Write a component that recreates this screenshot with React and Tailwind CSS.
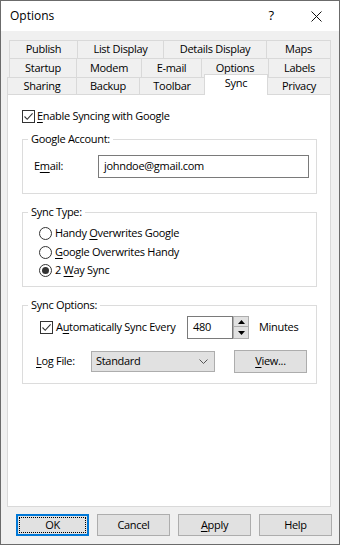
const font = { fontFamily: "'Open Sans', 'Liberation Sans', sans-serif" };

function U({ children }) {
  return <span className="underline underline-offset-[2px]">{children}</span>;
}

function Tab({ label, w, first, active }) {
  return (
    <div
      className={`${w} ${first ? "" : "-ml-px"} ${
        active
          ? "relative z-10 -mt-[3px] h-[21px] bg-white pb-[4px]"
          : "h-full bg-[#f0f0f0]"
      } flex items-center justify-center border border-b-0 border-[#d9d9d9] text-black`}
    >
      {label}
    </div>
  );
}

function Check() {
  return (
    <div className="flex h-[13px] w-[13px] shrink-0 items-center justify-center border border-[#333] bg-white">
      <svg width="11" height="11" viewBox="0 0 11 11" fill="none">
        <path d="M1.5 5.5 L4.2 8.3 L9.6 2.3" stroke="#333" strokeWidth="1.1" />
      </svg>
    </div>
  );
}

function Radio({ on }) {
  return (
    <div className="flex h-[13px] w-[13px] shrink-0 items-center justify-center rounded-full border border-[#333] bg-white">
      {on && <div className="h-[7px] w-[7px] rounded-full bg-[#333]" />}
    </div>
  );
}

function Group({ title, className, children }) {
  return (
    <fieldset className={`w-[295px] border border-[#dcdcdc] ${className}`}>
      <legend className="ml-[5px] px-[3px] leading-[16px] text-black">{title}</legend>
      {children}
    </fieldset>
  );
}

function Button({ children, def }) {
  return (
    <button
      className={`flex h-[22px] w-[73px] items-center justify-center bg-[#e1e1e1] text-black ${
        def
          ? "border-2 border-[#0078d7] outline-1 outline-dotted outline-black outline-offset-[-4px]"
          : "border border-[#adadad]"
      }`}
    >
      {children}
    </button>
  );
}

export default function App() {
  return (
    <div
      style={font}
      className="flex h-[545px] w-[340px] flex-col border border-[#6b6b6b] bg-[#f0f0f0] text-[11px] tracking-[-0.3px] text-black"
    >
      {/* title bar */}
      <div className="flex h-[30px] items-center bg-white pl-[9px] text-[12px] tracking-normal">
        <span>Options</span>
        <span className="ml-auto mr-[37px] text-[13px]">?</span>
        <svg className="mr-[17px]" width="11" height="11" viewBox="0 0 11 11">
          <path d="M0.5 0.5 L10.5 10.5 M10.5 0.5 L0.5 10.5" stroke="#111" strokeWidth="1" />
        </svg>
      </div>

      <div className="flex flex-col pl-[6px] pt-[9px]">
        {/* tab rows */}
        <div className="flex h-[18px] pl-[2px]">
          <Tab first label="Publish" w="w-[69px]" />
          <Tab label="List Display" w="w-[87px]" />
          <Tab label="Details Display" w="w-[104px]" />
          <Tab label="Maps" w="w-[65px]" />
        </div>
        <div className="flex h-[19px] pl-[2px]">
          <Tab first label="Startup" w="w-[68px]" />
          <Tab label="Modem" w="w-[66px]" />
          <Tab label="E-mail" w="w-[61px]" />
          <Tab label="Options" w="w-[68px]" />
          <Tab label="Labels" w="w-[63px]" />
        </div>
        <div className="flex h-[17px]">
          <Tab first label="Sharing" w="w-[70px]" />
          <Tab label="Backup" w="w-[64px]" />
          <Tab label="Toolbar" w="w-[66px]" />
          <Tab active label="Sync" w="w-[64px]" />
          <Tab label="Privacy" w="w-[64px]" />
        </div>

        {/* panel */}
        <div className="h-[413px] w-[324px] border border-[#d9d9d9] bg-white px-[14px] pt-[13px]">
          <div className="flex h-[16px] items-center gap-[2px]">
            <Check />
            <span>
              <U>E</U>nable Syncing with Google
            </span>
          </div>

          <Group title="Google Account:" className="mt-[7px] pb-[15px]">
            <div className="mt-[8px] flex items-center pl-[11px]">
              <span className="w-[64px]">
                E<U>m</U>ail:
              </span>
              <div className="flex h-[23px] w-[211px] items-center border border-[#7a7a7a] px-[5px]">
                johndoe@gmail.com
              </div>
            </div>
          </Group>

          <Group title="Sync Type:" className="mt-[10px] pb-[7px] pt-[4px]">
            <div className="flex flex-col pl-[16px]">
              <div className="flex h-[19px] items-center gap-[3px]">
                <Radio />
                <span>
                  Handy <U>O</U>verwrites Google
                </span>
              </div>
              <div className="flex h-[18px] items-center gap-[3px]">
                <Radio />
                <span>
                  <U>G</U>oogle Overwrites Handy
                </span>
              </div>
              <div className="flex h-[18px] items-center gap-[3px]">
                <Radio on />
                <span>
                  2 <U>W</U>ay Sync
                </span>
              </div>
            </div>
          </Group>

          <Group title="Sync Options:" className="mt-[10px] pb-[10px]">
            <div className="mt-[3px] flex h-[23px] items-center pl-[17px]">
              <div className="flex w-[147px] items-center gap-[3px] whitespace-nowrap">
                <Check />
                <span>
                  A<U>u</U>tomatically Sync Every
                </span>
              </div>
              <div className="flex h-[23px] w-[46px] items-center border border-[#7a7a7a] px-[5px]">480</div>
              <div className="flex h-[23px] w-[16px] flex-col">
                <div className="flex h-[11px] items-center justify-center border border-[#adadad] bg-[#e1e1e1]">
                  <svg width="7" height="4" viewBox="0 0 7 4">
                    <path d="M0 4 L3.5 0 L7 4 Z" fill="#000" />
                  </svg>
                </div>
                <div className="-mt-px flex h-[13px] items-center justify-center border border-[#adadad] bg-[#e1e1e1]">
                  <svg width="7" height="4" viewBox="0 0 7 4">
                    <path d="M0 0 L7 0 L3.5 4 Z" fill="#000" />
                  </svg>
                </div>
              </div>
              <span className="ml-[10px]">Minutes</span>
            </div>
            <div className="mt-[11px] flex h-[23px] items-center pl-[13px]">
              <span className="w-[55px]">
                <U>L</U>og File:
              </span>
              <div className="flex h-[21px] w-[124px] items-center border border-[#adadad] bg-[#e1e1e1] pl-[4px] pr-[6px]">
                <span>Standard</span>
                <svg className="ml-auto" width="9" height="5" viewBox="0 0 9 5" fill="none">
                  <path d="M0.5 0.5 L4.5 4.5 L8.5 0.5" stroke="#555" strokeWidth="1" />
                </svg>
              </div>
              <div className="ml-[19px] flex h-[23px] w-[73px] items-center justify-center border border-[#adadad] bg-[#e1e1e1]">
                <span>
                  <U>V</U>iew...
                </span>
              </div>
            </div>
          </Group>
        </div>
      </div>

      {/* buttons */}
      <div className="mt-[7px] flex gap-[8px] pl-[15px]">
        <Button def>OK</Button>
        <Button>Cancel</Button>
        <Button>
          <span>
            <U>A</U>pply
          </span>
        </Button>
        <Button>Help</Button>
      </div>
    </div>
  );
}
